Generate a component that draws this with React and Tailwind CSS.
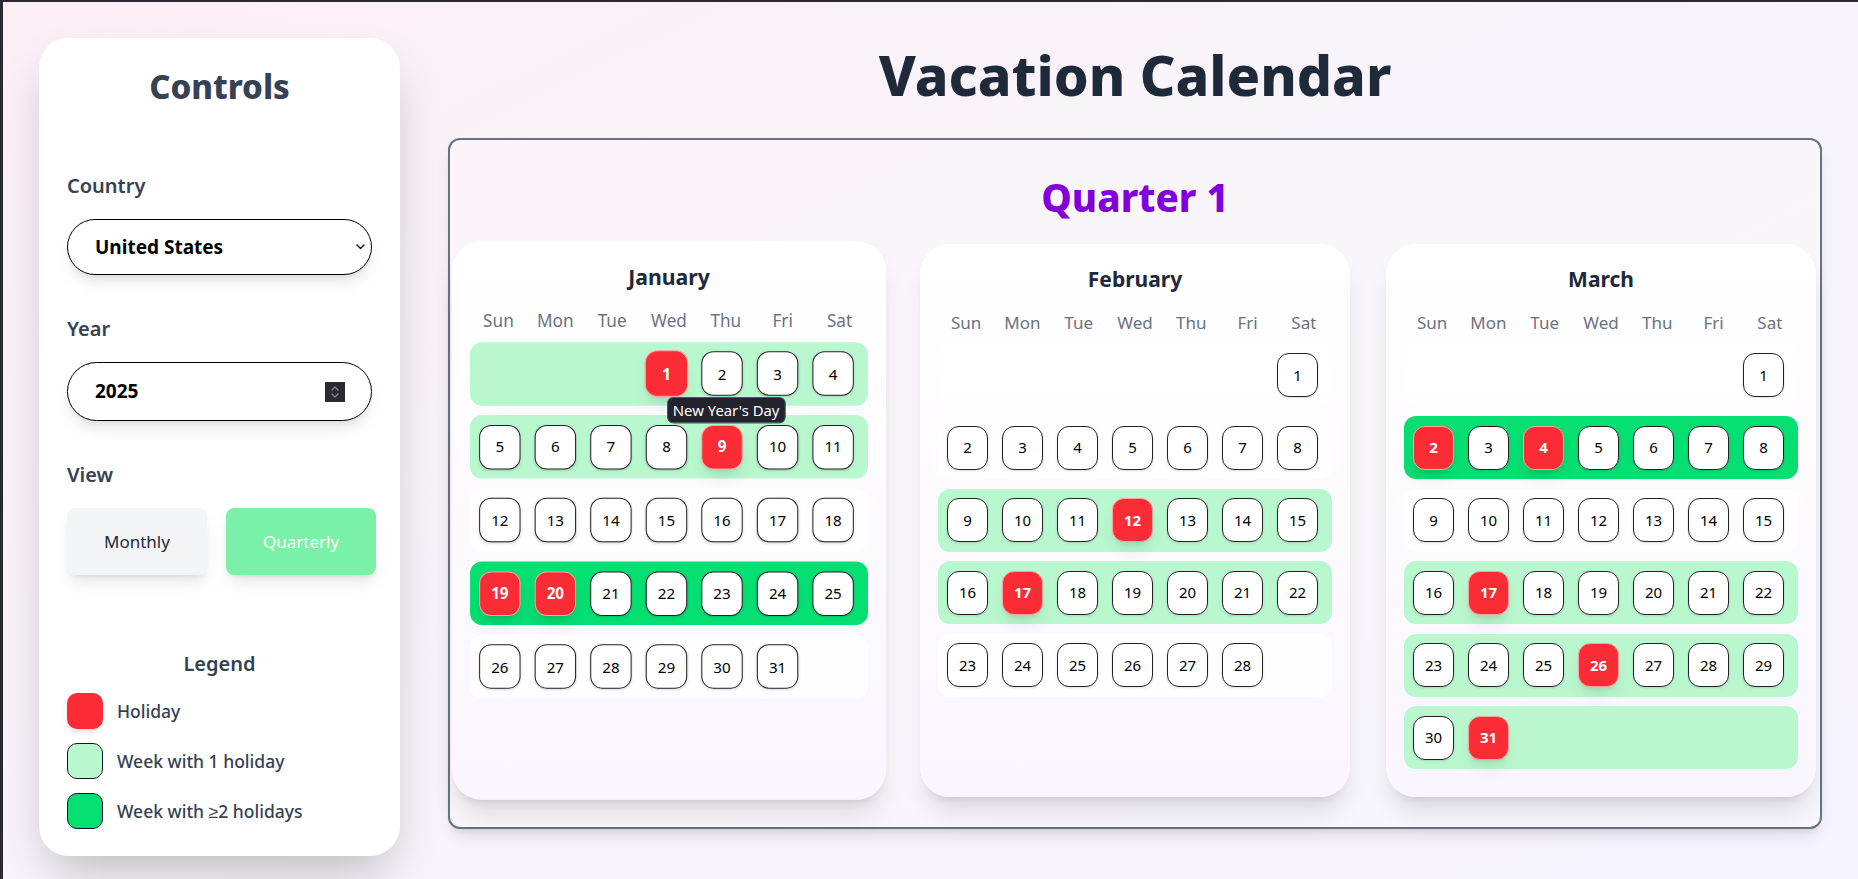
import React from "react";

const months = ["January", "February", "March"];
const weekdays = ["Sun", "Mon", "Tue", "Wed", "Thu", "Fri", "Sat"];

// 2025 holidays per month index
const holidays = {
  0: { 1: "New Year's Day", 9: "National Day of Mourning", 19: "Holiday", 20: "Martin Luther King Jr. Day" },
  1: { 12: "Holiday", 17: "Presidents' Day" },
  2: { 2: "Holiday", 4: "Holiday", 17: "Holiday", 26: "Holiday", 31: "Holiday" },
};

const getWeeks = (month) => {
  const first = new Date(2025, month, 1).getDay();
  const total = new Date(2025, month + 1, 0).getDate();
  const cells = [];
  for (let i = 0; i < first; i++) cells.push(null);
  for (let d = 1; d <= total; d++) cells.push(d);
  const weeks = [];
  for (let i = 0; i < cells.length; i += 7) weeks.push(cells.slice(i, i + 7));
  return weeks;
};

const Chevron = () => (
  <svg width="9" height="6" viewBox="0 0 9 6" fill="none">
    <path d="M1 1l3.5 3.5L8 1" stroke="#111" strokeWidth="1.4" strokeLinecap="round" strokeLinejoin="round" />
  </svg>
);

const Spinner = () => (
  <span className="flex h-[20px] w-[20px] flex-col items-center justify-center gap-[2px] bg-[#2b2a33]">
    <svg width="8" height="5" viewBox="0 0 8 5" fill="none">
      <path d="M1 4l3-3 3 3" stroke="#8b8b99" strokeWidth="1.2" strokeLinecap="round" />
    </svg>
    <svg width="8" height="5" viewBox="0 0 8 5" fill="none">
      <path d="M1 1l3 3 3-3" stroke="#8b8b99" strokeWidth="1.2" strokeLinecap="round" />
    </svg>
  </span>
);

const Controls = () => {
  return (
    <aside className="w-[361px] shrink-0 rounded-[30px] bg-white px-7 pt-[29px] pb-[27px] shadow-2xl">
      <h2 className="text-center text-[33px] leading-[40px] font-extrabold text-[#364153]">Controls</h2>

      <p className="mt-[65px] text-[20px] leading-[28px] font-semibold text-[#364153]">Country</p>
      <div className="relative mt-[19px]">
        <select className="h-[56px] w-full appearance-none rounded-full border border-black bg-white pl-[27px] text-[19px] font-bold text-black shadow-lg outline-none">
          <option>United States</option>
        </select>
        <span className="pointer-events-none absolute top-1/2 right-[7px] -translate-y-1/2">
          <Chevron />
        </span>
      </div>

      <p className="mt-[40px] text-[20px] leading-[28px] font-semibold text-[#364153]">Year</p>
      <div className="mt-[19px] flex h-[59px] items-center justify-between rounded-full border border-black bg-white pr-[26px] pl-[27px] shadow-lg">
        <span className="text-[19px] font-bold text-black">2025</span>
        <Spinner />
      </div>

      <p className="mt-[40px] text-[20px] leading-[28px] font-semibold text-[#364153]">View</p>
      <div className="mt-[19px] flex h-[67px] gap-[19px]">
        <button className="rounded-lg bg-gray-100 px-[37px] text-[17px] text-gray-800 shadow-lg">Monthly</button>
        <button className="rounded-lg bg-[#7bf1a8] px-[37px] text-[17px] text-white shadow-lg">Quarterly</button>
      </div>

      <p className="mt-[75px] text-center text-[20px] leading-[28px] font-semibold text-[#364153]">Legend</p>
      <div className="mt-[15px] flex flex-col gap-[14px]">
        <div className="flex items-center gap-[14px]">
          <span className="h-9 w-9 rounded-[10px] bg-[#fb2c36] shadow-md" />
          <span className="text-[17.5px] font-medium text-[#364153]">Holiday</span>
        </div>
        <div className="flex items-center gap-[14px]">
          <span className="h-9 w-9 rounded-[10px] border border-gray-900 bg-[#b9f8cf]" />
          <span className="text-[17.5px] font-medium text-[#364153]">Week with 1 holiday</span>
        </div>
        <div className="flex items-center gap-[14px]">
          <span className="h-9 w-9 rounded-[10px] border border-gray-900 bg-[#05df72]" />
          <span className="text-[17.5px] font-medium text-[#364153]">Week with ≥2 holidays</span>
        </div>
      </div>
    </aside>
  );
};

const DayCell = ({ day, holiday, hovered }) => {
  if (!day) return <div className="h-[44px] w-[41px]" />;
  if (holiday) {
    return (
      <div className={`relative flex h-[44px] w-[41px] items-center justify-center rounded-xl border-[1.5px] border-red-300 bg-[#fb2c36] text-[15px] font-bold text-white shadow-lg ${hovered ? "z-10 scale-105" : ""}`}>
        {day}
        {hovered && (
          <span className="absolute top-full left-1/2 z-20 mt-px rounded-md border border-gray-600 bg-[#23232d] px-[5px] py-[1px] text-[14px] font-normal whitespace-nowrap text-white">
            {holiday}
          </span>
        )}
      </div>
    );
  }
  return (
    <div className="flex h-[44px] w-[41px] items-center justify-center rounded-xl border-[1.5px] border-[#222] bg-white text-[15px] text-black shadow-sm">
      {day}
    </div>
  );
};

const MonthCard = ({ month, index }) => {
  const weeks = getWeeks(index);
  const hol = holidays[index];
  return (
    <div className={`rounded-[30px] bg-linear-to-b from-white to-[#faf5ff] px-[18px] pt-[21px] pb-[28px] shadow-xl ${index === 0 ? "scale-[1.01]" : ""}`}>
      <h3 className="text-center text-[21px] leading-[28px] font-bold text-[#1e2939]">{month}</h3>
      <div className="mt-[17.5px] grid grid-cols-7 text-center text-[17px] leading-[24px] text-gray-500">
        {weekdays.map((w) => (
          <span key={w}>{w}</span>
        ))}
      </div>
      <div className="mt-[9px] flex flex-col gap-[9.5px]">
        {weeks.map((week, wi) => {
          const count = week.filter((d) => d && hol[d]).length;
          const bg = count === 0 ? "bg-white/80" : count === 1 ? "bg-[#b9f8cf]" : "bg-[#05df72]";
          return (
            <div key={wi} className={`flex h-[63px] items-center gap-[14px] rounded-xl px-[9px] ${bg}`}>
              {week.map((d, di) => (
                <DayCell key={di} day={d} holiday={d ? hol[d] : null} hovered={index === 0 && d === 1} />
              ))}
            </div>
          );
        })}
      </div>
    </div>
  );
}

export default function App() {
  return (
    <div className="flex min-h-screen items-start gap-[48px] border-t-2 border-l-[3px] border-[#2a2a30] bg-linear-to-br from-[#fcf0f7] via-[#f8f4fb] to-[#f6f4fe] p-9 font-['Noto_Sans',sans-serif]">
      <Controls />
      <main className="flex-1">
        <h1 className="mt-[4.5px] text-center text-[55.5px] leading-[64px] font-extrabold text-[#1e2939]">
          Vacation Calendar
        </h1>
        <section className="mt-[31.5px] rounded-xl border-2 border-[#6a7282] bg-white/20 pt-[35px] pr-1 pb-[30px] pl-1 shadow-lg">
          <h2 className="text-center text-[38.5px] leading-[45px] font-extrabold text-[#8200db]">Quarter 1</h2>
          <div className="mt-[24px] grid grid-cols-3 gap-9">
            {months.map((m, i) => (
              <MonthCard key={m} month={m} index={i} />
            ))}
          </div>
        </section>
      </main>
    </div>
  );
}
